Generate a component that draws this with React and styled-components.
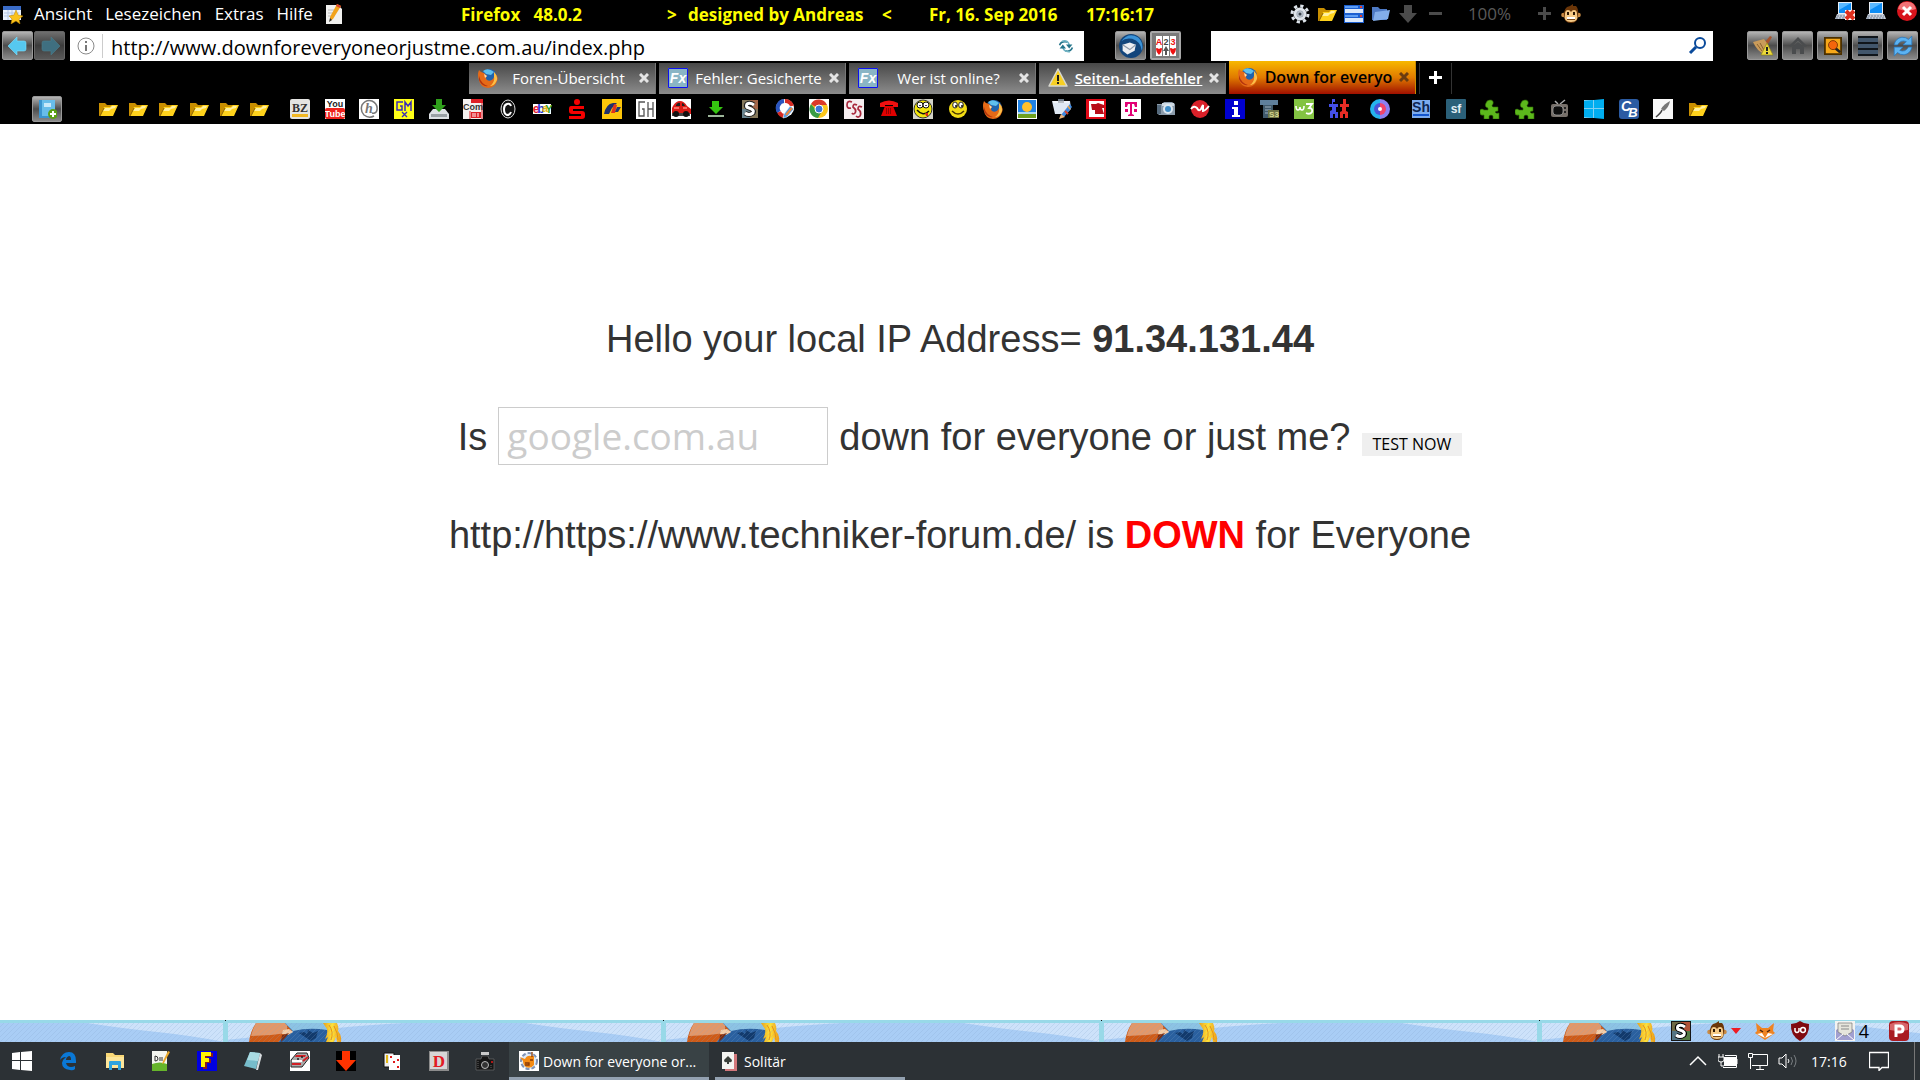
import React from 'react';
import styled, { createGlobalStyle, css } from 'styled-components';

const uiFont = `'Open Sans', 'Noto Sans', sans-serif`;

/* ---------- icons ---------- */

const Glyph = ({ x = 10, y, size, fill, bold, serif, italic, children }) => (
  <text
    x={x}
    y={y}
    fontSize={size}
    fill={fill}
    textAnchor='middle'
    fontWeight={bold ? 700 : 400}
    fontStyle={italic ? 'italic' : 'normal'}
    fontFamily={serif ? 'Liberation Serif, serif' : 'Liberation Sans, sans-serif'}
  >
    {children}
  </text>
);

const Fox = () => (
  <>
    <circle cx='11' cy='9' r='8' fill='#1f63ad' />
    <path d='M5 3Q10 -1 16 4L13 7L8 6Z' fill='#5fc0ee' />
    <path
      d='M1 2Q3 5 6 5L9 8Q7 10 9 12Q12 14 15 11Q17 8 16 4Q21 9 19 13Q17 20 10 20Q2 19 1 12Q-1 7 1 2Z'
      fill='#e56a17'
    />
    <path d='M16 4Q21 9 18 14Q16 18 12 18Q17 14 16 9Z' fill='#fbc048' />
    <path d='M1 8Q3 16 10 18Q4 19 1 12Z' fill='#b3340e' />
    <path d='M6 6L9 8L7 10Z' fill='#fde0b0' />
  </>
);

const Folder = () => (
  <>
    <path d='M1 4H7L9 6H16V9H7L3 17H1Z' fill='#c98f00' />
    <path d='M6 8H12L14 6H20L15 17H2Z' fill='#ffd21c' />
    <path d='M7 9H12L14 7H18L17 9L13 10L11 12H5Z' fill='#fff0a0' />
    <path d='M2 17L6 9' stroke='#8a6100' fill='none' />
  </>
);

const Monkey = () => (
  <>
    <circle cx='2.500' cy='11' r='2.300' fill='#c98b45' />
    <circle cx='17.500' cy='11' r='2.300' fill='#c98b45' />
    <path d='M3 13Q2 3 9 2L12 0L12 2L15 2Q18 5 17 13Q16 19 10 19Q4 19 3 13Z' fill='#6b3608' />
    <path d='M4 10Q4 6 7 6Q9 6 10 8Q11 6 13 6Q16 6 16 10Q18 18 10 18Q2 18 4 10Z' fill='#f5c986' />
    <path d='M7 8V11M13 8V11' stroke='#2b1604' strokeWidth='2' />
    <path d='M6 14H14' stroke='#fff' strokeWidth='2' />
    <path d='M6 15.500H14' stroke='#7c4a1a' />
  </>
);

const Puzzle = () => (
  <path
    d='M0 11Q2 9 4 11H8V9Q4 8 6 4Q7 1 10 1Q14 1 13 5Q11 7 13 8H18V12Q16 12 15 13Q16 15 19 14V20H13V17Q11 15 9 17V20H4V16Q0 17 0 14Z'
    fill='#5cb81c'
    stroke='#2f6d05'
    strokeWidth='.6'
  />
);

const StylishS = () => (
  <>
    <path d='M0 0H20V20H0Z' fill='#161616' />
    <path d='M1 1H10V10H1Z' fill='#6f6a45' />
    <path d='M10 1H19V10H10Z' fill='#b05338' />
    <path d='M1 10H10V19H1Z' fill='#547483' />
    <path d='M10 10H19V19H10Z' fill='#547a43' />
    <path d='M14 6Q10 3 7 5Q5 8 9 9Q15 11 13 14Q9 17 5 14' fill='none' stroke='#000' strokeWidth='5' />
    <path d='M14 6Q10 3 7 5Q5 8 9 9Q15 11 13 14Q9 17 5 14' fill='none' stroke='#fff' strokeWidth='3' />
  </>
);

const Laptop = () => (
  <>
    <path d='M3 1H17V13H3Z' fill='#e8eef5' />
    <path d='M4 2H16V12H4Z' fill='#0d8cf4' />
    <path d='M4 2H16L4 9Z' fill='#5ab8ff' />
    <path d='M2 13H18L20 18H0Z' fill='#c5cdd8' />
    <path d='M2 15H18M1 17H19' stroke='#74839a' strokeDasharray='2 1' />
  </>
);

const icons = {
  fox: <Fox />,
  folder: <Folder />,
  monkey: <Monkey />,
  puzzle: <Puzzle />,
  stylish: <StylishS />,
  laptop: <Laptop />,
  starPage: (
    <>
      <path d='M0 2H18V16H0Z' fill='#e9f0fb' />
      <path d='M0 2H18V6H0Z' fill='#3a6cc8' />
      <path d='M1 9H16M1 12H16M5 6V16M9 6V16' stroke='#b3c6e4' />
      <path
        d='M13 6L15 11L20 12L16 15L17 20L13 17L8 20L9 15L6 12L11 11Z'
        fill='#fbc21b'
        stroke='#bb8200'
        strokeWidth='.5'
      />
    </>
  ),
  note: (
    <>
      <path d='M2 1H14L18 5V20H2Z' fill='#f1f1ef' />
      <path d='M4 6H10M4 9H9M4 12H8' stroke='#bbb' />
      <path d='M13 0L17 2L9 15L6 17L6 13Z' fill='#f2a31b' />
      <path d='M13 0L17 2L16 4L12 2Z' fill='#d6412d' />
      <path d='M6 14L8 16L5 18Z' fill='#333' />
    </>
  ),
  gear: (
    <>
      <circle cx='10' cy='10' r='8' fill='none' stroke='#dde3ea' strokeWidth='3' strokeDasharray='3.200 3.080' />
      <circle cx='10' cy='10' r='5' fill='#8d98a5' stroke='#dfe4ea' strokeWidth='3' />
      <circle cx='10' cy='10' r='3' fill='#b5bec8' />
      <circle cx='10' cy='10' r='1.500' fill='#39424c' />
    </>
  ),
  panes: (
    <>
      <path d='M0 1H20V19H0Z' fill='#1c5fd0' />
      <path d='M1 5H19V9H1ZM1 14H19V18H1Z' fill='#dce9fa' />
      <path d='M1 2H14V4H1ZM1 11H14V13H1Z' fill='#5c9df4' />
      <path d='M16 3H18M16 12H18' stroke='#e6402c' strokeWidth='2' />
    </>
  ),
  blueFolder: (
    <>
      <path d='M1 3H7L9 5H16V16H1Z' fill='#4d79c4' />
      <path d='M4 8L19 6L17 15L2 17Z' fill='#83aeea' />
    </>
  ),
  downArrow: <path d='M6 1H14V9H19L10 19L1 9H6Z' fill='#4b4b4b' />,
  minus: <path d='M4 8H17V11H4Z' fill='#4b4b4b' />,
  plus: <path d='M9 3H12V8H17V11H12V16H9V11H4V8H9Z' fill='#4b4b4b' />,
  laptopOff: (
    <>
      <Laptop />
      <path d='M10 9H20V19H10Z' fill='#fff' />
      <path d='M11 10L19 18M19 10L11 18' stroke='#e0301e' strokeWidth='4' />
    </>
  ),
  close: (
    <>
      <circle cx='10' cy='10' r='10' fill='#d8141c' />
      <path d='M1 8Q3 0 10 1Q17 0 19 8Q10 11 1 8Z' fill='#f17276' />
      <path d='M6 6L14 14M14 6L6 14' stroke='#fff' strokeWidth='3' />
    </>
  ),
  back: <path d='M0 10L9 1V5H16Q18 5 18 7V13Q18 15 16 15H9V19Z' fill='#56c8f0' stroke='#7de0ff' strokeWidth='.6' />,
  forward: <path d='M20 10L11 1V5H4Q2 5 2 7V13Q2 15 4 15H11V19Z' fill='#3f6f80' stroke='#4c7d8c' strokeWidth='.6' />,
  info: (
    <>
      <circle cx='10' cy='10' r='8' fill='none' stroke='#8a8a8a' />
      <path d='M9 9H11V15H9ZM9 5H11V7H9Z' fill='#777' />
    </>
  ),
  reload: (
    <>
      <path d='M2 9Q4 3 12 5' stroke='#23748a' strokeWidth='2' fill='none' />
      <path d='M5 4Q13 2 14 9' stroke='#6fb3c4' strokeWidth='2' fill='none' />
      <path d='M10 8H18L14 13Z' fill='#23748a' />
      <path d='M18 12Q16 18 9 16' stroke='#23748a' strokeWidth='2' fill='none' />
      <path d='M15 17Q8 18 6 12' stroke='#6fb3c4' strokeWidth='2' fill='none' />
      <path d='M2 13H10L6 8Z' fill='#23748a' />
    </>
  ),
  thunderbird: (
    <>
      <circle cx='10' cy='10' r='10' fill='#12457c' />
      <path d='M2 6Q8 -2 16 3Q21 8 19 14Q18 6 11 4Q5 3 2 6Z' fill='#3b93d8' />
      <path d='M3 9L9 7L14 9L13 14L7 17L3 14Z' fill='#eceef2' />
      <path d='M3 9L9 13L14 9' stroke='#8d98a8' fill='none' />
    </>
  ),
  cards: (
    <>
      <path d='M0 0H6V20H0ZM7 0H13V20H7ZM14 0H20V20H14Z' fill='#fff' />
      <Glyph x='3' y='9' size='9' bold fill='#e11'>A</Glyph>
      <Glyph x='10' y='9' size='9' bold fill='#444'>2</Glyph>
      <Glyph x='17' y='9' size='9' bold fill='#e11'>3</Glyph>
      <path d='M0 13Q0 11 3 13Q6 11 6 13Q6 16 3 19Q0 16 0 13ZM14 13Q14 11 17 13Q20 11 20 13Q20 16 17 19Q14 16 14 13Z' fill='#e11' />
      <path d='M10 10L13 15H11V19H9V15H7Z' fill='#555' />
    </>
  ),
  search: (
    <>
      <circle cx='13' cy='7' r='5' fill='none' stroke='#0a4a9b' strokeWidth='2' />
      <path d='M9 11L3 17' stroke='#0a4a9b' strokeWidth='3' />
    </>
  ),
  broom: (
    <>
      <path d='M12 6L17 0L19 1L15 8Z' fill='#a8542c' />
      <path d='M0 6L11 3L16 10L11 18Q4 15 0 6Z' fill='#c99b5a' />
      <path d='M4 8L9 15M7 7L11 14' stroke='#8a6230' />
      <path d='M14 7L20 19H8Z' fill='#ecd93a' stroke='#8c7f10' strokeWidth='.6' />
      <path d='M14 11V15M14 16V18' stroke='#222' strokeWidth='2' />
    </>
  ),
  home: (
    <>
      <path d='M10 1L19 10L17 11L10 5L3 11L1 10Z' fill='#4a4c4e' />
      <path d='M10 6L16 11V18H12V13H8V18H4V11Z' fill='#4a4c4e' />
    </>
  ),
  find: (
    <>
      <path d='M1 1H19V19H1Z' fill='#f7a81a' stroke='#4a2f00' strokeWidth='2' />
      <path d='M12 12L18 17' stroke='#222' strokeWidth='3' />
      <circle cx='10' cy='9' r='5' fill='#f4650c' stroke='#7b3603' />
    </>
  ),
  list: (
    <>
      <path d='M0 0H20V20H0Z' fill='#42566b' />
      <path d='M0 1H20M0 7H20M0 13H20M0 19H20' stroke='#10151a' strokeWidth='2' />
    </>
  ),
  sync: (
    <>
      <path d='M2 9Q3 3 9 2Q13 2 15 4L18 1V9H10L13 6Q8 4 5 9Z' fill='#5cb3f2' stroke='#2a78bd' strokeWidth='.7' />
      <path d='M18 11Q17 17 11 18Q7 18 5 16L2 19V11H10L7 14Q12 16 15 11Z' fill='#5cb3f2' stroke='#2a78bd' strokeWidth='.7' />
    </>
  ),
  fx: (
    <>
      <path d='M0 0H20V20H0Z' fill='#8ab5c5' />
      <path d='M.5 .5H19.500V19.500H.5Z' fill='none' stroke='#0d10f2' />
      <Glyph y='15' size='14' bold italic fill='#fff'>Fx</Glyph>
    </>
  ),
  warning: (
    <>
      <path d='M10 1L19 18H1Z' fill='#f7cf23' stroke='#d8d8d0' strokeWidth='1.500' strokeLinejoin='round' />
      <path d='M10 7V13M10 14V16' stroke='#1c1c1c' strokeWidth='2' />
    </>
  ),
  addBook: (
    <>
      <path d='M2 1H18V19H2Z' fill='#3a94cf' />
      <path d='M5 1H18V17H5Z' fill='#68bdea' />
      <path d='M7 4H14V8H7Z' fill='#c9e9fa' />
      <circle cx='16' cy='15' r='5' fill='#5aa013' />
      <path d='M13 15H19M16 12V18' stroke='#fff' strokeWidth='2' />
    </>
  ),
  bz: (
    <>
      <rect width='20' height='20' rx='2' fill='#e4e4e2' />
      <Glyph y='13' size='12' bold serif fill='#333'>BZ</Glyph>
      <path d='M2 15H18V18H2Z' fill='#f2b824' />
    </>
  ),
  youtube: (
    <>
      <path d='M0 0H20V20H0Z' fill='#fff' />
      <rect y='9' width='20' height='11' rx='2' fill='#f0221c' />
      <Glyph y='8' size='9' bold fill='#222'>You</Glyph>
      <Glyph y='18' size='9' bold fill='#fff'>Tube</Glyph>
    </>
  ),
  at: (
    <>
      <path d='M0 0H20V20H0Z' fill='#fff' />
      <path d='M15 17Q10 20 5 16Q1 12 3 6Q7 0 13 2Q19 5 18 11Q17 15 13 14' fill='none' stroke='#777' strokeWidth='1.500' />
      <Glyph y='14' size='14' serif italic bold fill='#777'>h</Glyph>
    </>
  ),
  gmx: (
    <>
      <path d='M0 0H20V20H0Z' fill='#ffff18' />
      <path d='M9 3H3V11H8V7H6M11 12V3L14 7L17 3V12' stroke='#3a2bb8' strokeWidth='1.500' fill='none' />
      <path d='M8 13L13 18M13 13L8 18' stroke='#3a2bb8' strokeWidth='1.300' />
    </>
  ),
  install: (
    <>
      <path d='M4 10H16L20 15V20H0V15Z' fill='#dde1e4' />
      <path d='M2 15H18V18H2Z' fill='#9aa1a5' />
      <path d='M7 0H13V6H17L10 13L3 6H7Z' fill='#30a01c' />
    </>
  ),
  com: (
    <>
      <path d='M0 0H20V20H0Z' fill='#f4f1ef' />
      <path d='M8 0H20V4H8ZM8 13H18V19H8Z' fill='#df1f26' />
      <path d='M19 4V20M7 12V20' stroke='#df1f26' />
      <Glyph y='11' size='9' bold fill='#333'>Com</Glyph>
      <path d='M10 14V18M12 14V18M15 14V18' stroke='#fff' />
    </>
  ),
  chip: (
    <>
      <ellipse cx='10' cy='10' rx='7' ry='9' fill='#111' stroke='#ddd' />
      <path d='M13 7Q12 4 9 5Q6 6 6 10Q6 15 9 16Q12 16 13 13' stroke='#fff' strokeWidth='2' fill='none' />
    </>
  ),
  ebay: (
    <>
      <path d='M1 5H19V15H1Z' fill='#fff' />
      <Glyph x='4' y='14' size='12' bold fill='#e3202c'>e</Glyph>
      <Glyph x='9' y='14' size='12' bold fill='#2a37d8'>b</Glyph>
      <Glyph x='13' y='13' size='11' bold fill='#e8b80e'>a</Glyph>
      <Glyph x='17' y='14' size='11' bold fill='#3aa324'>Y</Glyph>
    </>
  ),
  sparkasse: (
    <>
      <circle cx='10' cy='3' r='3' fill='#f60000' />
      <path d='M4 7H17V10H6V12H15Q18 12 18 15V17Q18 20 15 20H2V17H14V15H5Q2 15 2 12V10Q2 7 4 7Z' fill='#f60000' />
    </>
  ),
  flag: (
    <>
      <path d='M0 0H20V20H0Z' fill='#fdc60a' />
      <path d='M2 15Q4 5 11 4H15L10 9L7 15Z' fill='#20306b' />
      <path d='M9 14L12 5L15 6L13 14Z' fill='#e3321c' />
      <path d='M15 8H19L16 13L13 13Z' fill='#27356d' />
    </>
  ),
  gh: (
    <>
      <path d='M0 0H20V20H0Z' fill='#fff' />
      <path d='M9 3H3V17H8V10H6M12 3V18M17 3V18M12 10H17' stroke='#555' strokeWidth='1.300' fill='none' />
    </>
  ),
  car: (
    <>
      <path d='M0 0H20V20H0Z' fill='#fff' />
      <path d='M2 7Q5 2 9 2Q13 2 16 7L20 10V15H1V9Z' fill='#dc1c17' />
      <path d='M5 6Q7 3 9 4V7H5ZM11 4Q13 4 14 7H11Z' fill='#222' />
      <path d='M1 14H19V17H1Z' fill='#444' />
      <circle cx='5' cy='15' r='3' fill='#111' />
      <circle cx='15' cy='15' r='3' fill='#111' />
      <path d='M3 9H8M12 9H16' stroke='#ff8b7e' strokeWidth='1.500' />
    </>
  ),
  getArrow: (
    <>
      <path d='M6 2H13V8H17L10 15L3 8H6Z' fill='#35c510' />
      <path d='M2 16H18V18H2Z' fill='#9db69a' />
    </>
  ),
  stylishSmall: (
    <>
      <path d='M2 1H18V19H2Z' fill='#86795c' />
      <path d='M10 1H18V10H10Z' fill='#a4674a' />
      <path d='M2 10H10V19H2Z' fill='#6a8590' />
      <path d='M14 6Q10 3 7 5Q5 8 9 9Q15 11 13 14Q9 17 5 14' fill='none' stroke='#222' strokeWidth='5' />
      <path d='M14 6Q10 3 7 5Q5 8 9 9Q15 11 13 14Q9 17 5 14' fill='none' stroke='#fff' strokeWidth='3' />
    </>
  ),
  swirl: (
    <>
      <circle cx='10' cy='9' r='9' fill='#fff' />
      <path d='M9 2A7 7 0 0 0 4 13' stroke='#2a55bf' strokeWidth='4' fill='none' />
      <path d='M10 2A7 7 0 0 1 17 7' stroke='#d62b23' strokeWidth='4' fill='none' />
      <path d='M4 13A7 7 0 0 0 9 17' stroke='#d62b23' strokeWidth='4' fill='none' />
      <path d='M15 7L19 10L12 18L8 19L9 15Z' fill='#4c9be6' stroke='#fff' strokeWidth='.6' />
      <path d='M11 16L17 9' stroke='#f0883a' strokeWidth='2' />
    </>
  ),
  chrome: (
    <>
      <path d='M0 0H20V20H0Z' fill='#fff' />
      <circle cx='10' cy='10' r='9' fill='#fbc61c' />
      <path d='M10 10L2 5A9 9 0 0 1 18 6H10Z' fill='#dc3a2a' />
      <path d='M2 5A9 9 0 0 0 9 19L13 12L8 12Z' fill='#3a9d45' />
      <circle cx='10' cy='10' r='4' fill='#3d78d8' stroke='#fff' />
    </>
  ),
  css: (
    <>
      <path d='M0 0H20V20H0Z' fill='#f5edef' />
      <path
        d='M8 3Q3 1 3 6Q3 10 7 9M13 6Q9 4 9 8Q13 11 11 14Q9 16 8 14M18 8Q14 6 14 10Q18 13 16 17Q14 19 12 17'
        stroke='#a8283c'
        strokeWidth='1.700'
        fill='none'
      />
    </>
  ),
  phone: (
    <>
      <path d='M1 4Q10 -1 19 4V8H14V6H6V8H1Z' fill='#ee1010' />
      <path d='M6 7H14L18 17H2Z' fill='#e00000' />
      <path d='M7 10H13M7 12H13M7 14H13' stroke='#400' strokeDasharray='1 1' />
    </>
  ),
  crazySmiley: (
    <>
      <path d='M0 0H20V20H0Z' fill='#d3d3c8' />
      <circle cx='10' cy='10' r='9' fill='#f2e60c' stroke='#333' />
      <circle cx='7' cy='6' r='3' fill='#fff' stroke='#111' />
      <circle cx='13' cy='6' r='3' fill='#fff' stroke='#111' />
      <path d='M7 6V7M13 6V7M4 11Q10 18 16 12' stroke='#111' strokeWidth='1.500' fill='none' />
      <path d='M12 14H15V17H13Z' fill='#dc2b16' />
    </>
  ),
  smiley: (
    <>
      <circle cx='10' cy='10' r='9' fill='#f2dc14' />
      <ellipse cx='7' cy='6' rx='2.300' ry='3' fill='#fff' stroke='#222' />
      <ellipse cx='13' cy='6' rx='2.300' ry='3' fill='#fff' stroke='#222' />
      <path d='M8 6V8M14 6V8' stroke='#111' strokeWidth='1.500' />
      <path d='M4 12Q10 18 16 12' stroke='#4a3800' fill='none' strokeWidth='1.500' />
    </>
  ),
  sunset: (
    <>
      <path d='M0 0H20V20H0Z' fill='#fff' />
      <path d='M1 1H19V14H1Z' fill='#1f82e6' />
      <path d='M1 13H19V15H1Z' fill='#a8d7f4' />
      <path d='M1 15H19V19H1Z' fill='#6fa01f' />
      <circle cx='10' cy='8' r='5' fill='#ffc02c' />
    </>
  ),
  clipboard: (
    <>
      <path d='M0 2H18L19 10L14 15L3 15Z' fill='#dfe8f3' />
      <path d='M6 0H12V4H6Z' fill='#6f7b88' />
      <path d='M1 3H17' stroke='#fff' />
      <path d='M18 5L20 8L12 18L9 16Z' fill='#3f8ae2' />
      <path d='M16 7L18 10' stroke='#e8a34a' strokeWidth='1.500' />
      <path d='M9 15L13 18L7 20Z' fill='#e9b37d' />
      <path d='M13 12L16 15' stroke='#d9452b' strokeWidth='2' />
    </>
  ),
  redBadge: (
    <>
      <path d='M0 0H20V20H0Z' fill='#e00a18' />
      <path d='M3 2H18V18H3Z' fill='#fff' />
      <path d='M5 5H10L12 4L18 6V9H16L18 15H9V11H6Z' fill='#b80d19' />
    </>
  ),
  telekom: (
    <>
      <path d='M0 0H20V20H0Z' fill='#fff' />
      <path d='M4 3H16V8H14L13 5H11V15L13 16V17H7V16L9 15V5H7L6 8H4Z' fill='#e20074' />
      <path d='M4 10H7V13H4ZM13 10H16V13H13Z' fill='#e20074' />
    </>
  ),
  camera: (
    <>
      <path d='M1 5H6L8 3H16L19 5V16H3L1 14Z' fill='#8b9bab' />
      <path d='M1 6H5V15H1Z' fill='#55697c' />
      <path d='M6 4H18V7H6Z' fill='#ccd7e1' />
      <circle cx='12' cy='10' r='5' fill='#dce7f0' />
      <circle cx='12' cy='10' r='3' fill='#3d8bc6' />
    </>
  ),
  pulse: (
    <>
      <circle cx='10' cy='10' r='9' fill='#d9212a' />
      <path d='M1 10Q4 6 7 9Q9 13 11 10L13 6V12Q15 12 19 7' stroke='#fff' strokeWidth='2' fill='none' />
    </>
  ),
  infoBlue: (
    <>
      <path d='M0 0H20V20H0Z' fill='#0000cf' />
      <path d='M9 2H13V6H9ZM7 8H13V16H15V18H7V16H9V10H7Z' fill='#fff' />
    </>
  ),
  tableTool: (
    <>
      <path d='M0 1H18V6H0Z' fill='#5f7f9b' />
      <path d='M3 6H13V19H3Z' fill='#40596b' />
      <path d='M5 8H11M5 11H11M5 14H11' stroke='#a0b2c0' />
      <path d='M8 11H19V19H8Z' fill='#6f7445' />
      <Glyph x='14' y='18' size='8' bold fill='#d5d68f'>S3</Glyph>
    </>
  ),
  w3: (
    <>
      <path d='M0 0H20V20H0Z' fill='#83c342' />
      <path d='M2 7Q2 11 4 11Q6 11 6 8Q6 11 8 11Q10 11 10 7' stroke='#fff' strokeWidth='1.600' fill='none' />
      <path d='M12 5H18L15 9Q19 9 18 13Q16 16 12 14' stroke='#fff' strokeWidth='1.800' fill='none' />
    </>
  ),
  people: (
    <>
      <path d='M3 0H6V3H4V5H9V8H7V13H9V19H6V15L4 15V19H1V12L3 11V8H0V5H3Z' fill='#4450e8' />
      <path d='M14 0H17V5H20V8H17V12L19 13V19H16V15H14V19H11V13L13 12V8H11V5H14Z' fill='#e82c25' />
    </>
  ),
  target: (
    <>
      <path d='M10 0A10 10 0 0 0 10 20Z' fill='#25b4ee' />
      <path d='M10 0A10 10 0 0 1 10 20Z' fill='#8c7ff2' />
      <path d='M10 4A6 6 0 0 0 10 16Z' fill='#4b55d8' />
      <path d='M10 4A6 6 0 0 1 10 16Z' fill='#f2456b' />
      <circle cx='10' cy='10' r='2' fill='#fff' />
    </>
  ),
  sh: (
    <>
      <path d='M1 1H19V19H1Z' fill='#7cabee' />
      <Glyph y='13' size='14' bold fill='#0d2450'>Sh</Glyph>
      <path d='M2 16H18' stroke='#1355ce' strokeWidth='2' />
    </>
  ),
  sf: (
    <>
      <rect width='20' height='20' rx='1' fill='#2b6079' />
      <Glyph y='14' size='12' bold fill='#e3eef3'>sf</Glyph>
    </>
  ),
  tv: (
    <>
      <path d='M8 5L5 2M10 5L15 1' stroke='#aaa' strokeWidth='1.500' />
      <rect x='1' y='5' width='17' height='13' rx='2' fill='#77706a' />
      <rect x='3' y='7' width='10' height='9' rx='3' fill='#0d0d0d' stroke='#aaa' strokeWidth='.7' />
      <path d='M15 8V10M15 12V14' stroke='#222' strokeWidth='2' />
    </>
  ),
  windows: (
    <>
      <path d='M0 1H20V19H0Z' fill='#7fd0f2' />
      <path d='M0 2L9 1V9H0ZM10 1L20 0V9H10ZM0 10H9V19L0 18ZM10 10H20V20L10 19Z' fill='#00aef0' />
    </>
  ),
  cb: (
    <>
      <rect width='20' height='20' rx='3' fill='#2b5ba2' />
      <Glyph x='7' y='12' size='14' bold italic fill='#fff'>C</Glyph>
      <Glyph x='14' y='18' size='13' bold italic fill='#fff'>B</Glyph>
    </>
  ),
  pen: (
    <>
      <path d='M0 0H20V20H0Z' fill='#f8f8f8' />
      <path d='M17 2Q16 8 11 12L8 10Q11 5 17 2Z' fill='#777' />
      <path d='M9 11Q8 14 3 18' stroke='#444' strokeWidth='1.500' fill='none' />
    </>
  ),
  miniFox: (
    <>
      <path d='M1 2L7 7H13L19 2L18 10L20 12L10 19L0 12L2 10Z' fill='#ef8422' />
      <path d='M2 13L7 12L10 17ZM18 13L13 12L10 17Z' fill='#fff' />
      <path d='M5 9L8 11M15 9L12 11' stroke='#4b2208' strokeWidth='1.500' />
    </>
  ),
  shield: (
    <>
      <path d='M10 0Q14 3 19 3Q20 14 10 20Q0 14 1 3Q6 3 10 0Z' fill='#800a10' />
      <path d='M5 7V10Q7 13 9 10V7' stroke='#fff' strokeWidth='1.500' fill='none' />
      <circle cx='13' cy='9' r='2.400' fill='none' stroke='#fff' strokeWidth='1.500' />
    </>
  ),
  mail: (
    <>
      <path d='M0 0H20V20H0Z' fill='#f3f3f1' />
      <path d='M1 9L10 4L19 9V19H1Z' fill='#a19fd0' />
      <path d='M3 2H17V11L10 15L3 11Z' fill='#e6e5dc' stroke='#777' strokeWidth='.7' />
      <path d='M6 5H14M6 8H14' stroke='#888' />
      <path d='M1 19L8 13M19 19L12 13' stroke='#fff' />
    </>
  ),
  pBadge: (
    <>
      <rect width='20' height='20' rx='4' fill='#a91a20' />
      <path d='M1 3Q10 -1 19 3V9Q10 11 1 9Z' fill='#d7656a' />
      <path d='M7 16V5H11Q14 5 14 8Q14 11 11 11H8' stroke='#fff' strokeWidth='3' fill='none' />
    </>
  ),
  winLogo: <path d='M0 2L8 1V9H0ZM9 1L20 0V9H9ZM0 10H8V19L0 18ZM9 10H20V20L9 19Z' fill='#fff' />,
  edge: (
    <path
      d='M2 9Q4 1 11 1Q18 1 18 10V12H8Q9 16 13 16Q15 16 17 15V18Q15 20 12 19Q4 18 4 12Q5 8 8 6Q4 6 2 9ZM8 9H13Q13 5 11 5Q8 6 8 9Z'
      fill='#0a78d6'
      fillRule='evenodd'
    />
  ),
  explorer: (
    <>
      <path d='M1 2H8L10 4H19V17H1Z' fill='#f9d877' />
      <path d='M1 6H19V17H1Z' fill='#fde69a' />
      <path d='M4 19V11Q4 10 5 10H15Q16 10 16 11V19H13V14H7V19Z' fill='#2da3de' />
    </>
  ),
  notepad: (
    <>
      <path d='M1 0H16V20H1Z' fill='#f4f6f0' />
      <path d='M1 13Q9 10 16 13V20H1Z' fill='#66b52b' />
      <path d='M4 5V10Q7 10 7 8Q7 5 4 5M9 6V10M11 6V10' stroke='#333' fill='none' />
      <path d='M17 0L19 1L13 12L11 13L12 10Z' fill='#eba92b' />
    </>
  ),
  fBlue: (
    <>
      <path d='M0 0H20V20H0Z' fill='#0000e0' />
      <path d='M6 2H16V6H10V8H14V12H10V18H6Z' fill='#8a1c1c' />
      <path d='M4 1H14V5H8V7H12V11H8V16H4Z' fill='#fff200' />
    </>
  ),
  pad: (
    <>
      <path d='M7 1L17 2L13 18L1 15Z' fill='#77bccb' />
      <path d='M7 1L17 2L15 10L4 9Z' fill='#a9dbe3' />
      <path d='M17 2L19 4L15 19H13Z' fill='#d8dde0' />
    </>
  ),
  cartridge: (
    <>
      <path d='M0 0H20V20H0Z' fill='#fff' />
      <path d='M1 9L7 2H17L19 7L12 16H1Z' fill='#aaa' stroke='#222' />
      <path d='M6 4H16L15 6H5Z' fill='#d12025' />
      <path d='M2 9H12V11H2Z' fill='#fff' />
      <path d='M2 13H11M13 10L18 6' stroke='#d12025' strokeWidth='2' />
      <path d='M8 7V9M12 5V7' stroke='#222' strokeWidth='1.500' />
    </>
  ),
  redArrow: (
    <>
      <path d='M0 0H20V20H0Z' fill='#000' />
      <path d='M6 0H14V9H20L10 20L0 9H6Z' fill='#ff3300' />
    </>
  ),
  playingCards: (
    <>
      <path d='M2 2H12V16H2Z' fill='#eee' stroke='#111' />
      <path d='M4 4H6V12H4Z' fill='#e3b816' />
      <path d='M7 4H18V19H7Z' fill='#fff' />
      <path d='M8 5H10V7H8ZM15 8H17V10H15ZM11 10H13V12H11ZM15 15H17V17H15Z' fill='#e01818' />
    </>
  ),
  dBadge: (
    <>
      <path d='M0 0H20V20H0Z' fill='#8c8c8c' />
      <path d='M1 1H18V18H1Z' fill='#d6d6d6' />
      <Glyph y='16' size='17' bold serif fill='#e11b22'>D</Glyph>
    </>
  ),
  slr: (
    <>
      <path d='M6 1H14V4H6Z' fill='#c9c9c9' />
      <path d='M7 5H13L14 8H19V19H1V8H6Z' fill='#151515' stroke='#777' strokeWidth='.6' />
      <circle cx='10' cy='14' r='3.500' fill='#333' stroke='#bbb' />
      <path d='M3 10V17M16 14V18' stroke='#666' strokeDasharray='1 1' />
      <path d='M17 10V12' stroke='#e01818' strokeWidth='1.500' />
    </>
  ),
  foxTask: (
    <>
      <path d='M0 0H20V20H0Z' fill='#fff' />
      <circle cx='10' cy='10' r='8' fill='#dfeaf5' stroke='#7f93b5' strokeWidth='2' strokeDasharray='4 2' />
      <path d='M1 6L6 8Q8 4 12 5L15 5V14Q12 18 7 16Q4 14 4 10Z' fill='#f38b14' />
      <path d='M13 1V6M6 12H10V14H6M11 9H14' stroke='#8a3a05' strokeWidth='1.300' fill='none' />
    </>
  ),
  solitaire: (
    <>
      <path d='M5 3H17V20H5Z' fill='#d2777b' />
      <path d='M2 1H14V18H2Z' fill='#f4f4f2' />
      <path d='M8 5L12 9Q12 12 9 11V13H7V11Q4 12 4 9Z' fill='#3a3f3a' />
    </>
  ),
  chevronUp: <path d='M2 14L10 6L18 14' stroke='#fff' strokeWidth='1.500' fill='none' />,
  battery: (
    <>
      <path d='M6 6H18V15H6Z' fill='#fff' />
      <path d='M5 16.500H18.500V4.500H7M19 8V13' stroke='#fff' fill='none' />
      <path d='M0 6H6V9Q6 11 3 11Q0 11 0 9ZM1 3V6M5 3V6M3 11V15H6' stroke='#fff' fill='none' />
    </>
  ),
  network: (
    <>
      <path d='M5 3.500H19.500V14.500H4M12 15V18M8 18.500H16' stroke='#fff' fill='none' />
      <path d='M.5 2.500H4.500V6.500H.5ZM2.500 7V18' stroke='#fff' fill='none' />
    </>
  ),
  volume: (
    <>
      <path d='M1 7H4L8 3V17L4 13H1Z' stroke='#fff' fill='none' />
      <path d='M10 8Q12 10 10 12' stroke='#fff' fill='none' />
      <path d='M13 6Q16 10 13 14M16 4Q20 10 16 16' stroke='#7a7f82' fill='none' />
    </>
  ),
  message: <path d='M.5 1.500H19.500V16.500H13L10 19.500V16.500H.5Z' stroke='#fff' fill='none' strokeWidth='1.300' />,
};

const Icon = ({ name, size = 20 }) => (
  <svg width={size} height={size} viewBox='0 0 20 20' aria-hidden='true'>
    {icons[name]}
  </svg>
);

/* ---------- data ---------- */

const menus = ['Ansicht', 'Lesezeichen', 'Extras', 'Hilfe'];

const tabs = [
  { icon: 'fox', title: 'Foren-Übersicht' },
  { icon: 'fx', title: 'Fehler: Gesicherte' },
  { icon: 'fx', title: 'Wer ist online?' },
  { icon: 'warning', title: 'Seiten-Ladefehler', unread: true },
  { icon: 'fox', title: 'Down for everyo', active: true },
];

const folders = [1, 2, 3, 4, 5, 6];

const bookmarks = [
  'bz', 'youtube', 'at', 'gmx', 'install', 'com', 'chip', 'ebay', 'sparkasse', 'flag',
  'gh', 'car', 'getArrow', 'stylishSmall', 'swirl', 'chrome', 'css', 'phone', 'crazySmiley', 'smiley',
  'fox', 'sunset', 'clipboard', 'redBadge', 'telekom', 'camera', 'pulse', 'infoBlue', 'tableTool', 'w3',
  'people',
];

const moreBookmarks = ['sh', 'sf', 'puzzle', 'puzzle', 'tv', 'windows', 'cb', 'pen', 'folder'];

const launchers = [
  'winLogo', 'edge', 'explorer', 'notepad', 'fBlue', 'pad', 'cartridge', 'redArrow', 'playingCards', 'dBadge', 'slr',
];

/* ---------- app ---------- */

const MenuBar = () => (
  <MenuRow>
    <MenuGroup>
      <Icon name='starPage' />
      {menus.map((menu) => (
        <MenuButton key={menu}>{menu}</MenuButton>
      ))}
      <IconButton aria-label='Notiz'>
        <Icon name='note' />
      </IconButton>
    </MenuGroup>
    <TitleGroup>
      <TitlePart $width={206}>Firefox &nbsp; 48.0.2</TitlePart>
      <TitlePart $width={21}>&gt;</TitlePart>
      <TitlePart $width={194}>designed by Andreas</TitlePart>
      <TitlePart $width={47}>&lt;</TitlePart>
      <TitlePart $width={157}>Fr, 16. Sep 2016</TitlePart>
      <TitlePart $width={70}>17:16:17</TitlePart>
    </TitleGroup>
    <ToolGroup>
      <IconButton aria-label='Einstellungen'><Icon name='gear' /></IconButton>
      <IconButton aria-label='Ordner'><Icon name='folder' /></IconButton>
      <IconButton aria-label='Fenster'><Icon name='panes' /></IconButton>
      <IconButton aria-label='Profil'><Icon name='blueFolder' /></IconButton>
      <IconButton aria-label='Downloads'><Icon name='downArrow' /></IconButton>
      <IconButton aria-label='Verkleinern'><Icon name='minus' /></IconButton>
      <ZoomLevel>100%</ZoomLevel>
      <IconButton aria-label='Vergrößern'><Icon name='plus' /></IconButton>
      <IconButton aria-label='Greasemonkey'><Icon name='monkey' /></IconButton>
    </ToolGroup>
    <WindowGroup>
      <IconButton aria-label='Minimieren'><Icon name='laptopOff' /></IconButton>
      <IconButton aria-label='Maximieren'><Icon name='laptop' /></IconButton>
      <IconButton aria-label='Schließen'><Icon name='close' /></IconButton>
    </WindowGroup>
  </MenuRow>
);

const NavBar = () => (
  <NavRow>
    <ButtonPair $gap={1}>
      <MetalButton aria-label='Zurück'><Icon name='back' /></MetalButton>
      <MetalButton $dim aria-label='Vor'><Icon name='forward' /></MetalButton>
    </ButtonPair>
    <UrlBox>
      <Icon name='info' />
      <Divider />
      <UrlInput aria-label='Adresse' defaultValue='http://www.downforeveryoneorjustme.com.au/index.php' />
      <IconButton aria-label='Neu laden'><Icon name='reload' size={16} /></IconButton>
    </UrlBox>
    <AppButtons>
      <MetalButton aria-label='Thunderbird'><Icon name='thunderbird' size={24} /></MetalButton>
      <MetalButton $flat aria-label='Solitär'><Icon name='cards' /></MetalButton>
    </AppButtons>
    <SearchBox>
      <SearchInput aria-label='Suchen' />
      <IconButton aria-label='Suche starten'><Icon name='search' /></IconButton>
    </SearchBox>
    <ButtonPair $gap={4}>
      <MetalButton aria-label='Aufräumen'><Icon name='broom' /></MetalButton>
      <MetalButton aria-label='Startseite'><Icon name='home' /></MetalButton>
      <MetalButton aria-label='Finden'><Icon name='find' size={18} /></MetalButton>
      <MetalButton aria-label='Liste'><Icon name='list' /></MetalButton>
      <MetalButton aria-label='Aktualisieren'><Icon name='sync' size={22} /></MetalButton>
    </ButtonPair>
  </NavRow>
);

const TabBar = () => (
  <TabRow>
    {tabs.map((tab) => (
      <Tab key={tab.title} $active={tab.active}>
        <Icon name={tab.icon} />
        <TabTitle $active={tab.active} $unread={tab.unread}>{tab.title}</TabTitle>
        <TabClose $active={tab.active} aria-label='Tab schließen'>
          <svg width='10' height='10' viewBox='0 0 10 10'>
            <path d='M1 1L9 9M9 1L1 9' stroke='currentColor' strokeWidth='3' />
          </svg>
        </TabClose>
      </Tab>
    ))}
    <NewTab aria-label='Neuer Tab'>
      <svg width='13' height='13' viewBox='0 0 13 13'>
        <path d='M5 0H8V5H13V8H8V13H5V8H0V5H5Z' fill='#fff' />
      </svg>
    </NewTab>
  </TabRow>
);

const BookmarkBar = () => (
  <BookmarkRow>
    <MetalButton $short aria-label='Lesezeichen hinzufügen'><Icon name='addBook' /></MetalButton>
    <FolderList>
      {folders.map((folder) => (
        <Bookmark key={folder} href='#' aria-label='Ordner'><Icon name='folder' /></Bookmark>
      ))}
    </FolderList>
    <BookmarkList $width={1059}>
      {bookmarks.map((name) => (
        <Bookmark key={name} href='#' aria-label={name}><Icon name={name} /></Bookmark>
      ))}
    </BookmarkList>
    <Bookmark href='#' aria-label='target'><Icon name='target' /></Bookmark>
    <BookmarkList $width={297}>
      {moreBookmarks.map((name, i) => (
        <Bookmark key={i} href='#' aria-label={name}><Icon name={name} /></Bookmark>
      ))}
    </BookmarkList>
  </BookmarkRow>
);

const Persona = () => (
  <PersonaArt aria-hidden='true'>
    <defs>
      <pattern id='hatch' width='5' height='5' patternUnits='userSpaceOnUse'>
        <path d='M0 5L5 0' stroke='#7f9fc8' strokeWidth='.6' opacity='.35' />
      </pattern>
      <linearGradient id='flame' x1='0' x2='1'>
        <stop offset='0' stopColor='#f0a313' />
        <stop offset='.5' stopColor='#ffe23a' />
        <stop offset='1' stopColor='#f19a10' />
      </linearGradient>
      <pattern id='tile' x='225' width='438' height='22' patternUnits='userSpaceOnUse'>
        <path d='M0 0H438V22H0Z' fill='#a9cdf5' />
        <path d='M300 3Q340 9 370 12T438 22V3Z' fill='#cde2fa' />
        <path d='M0 3H180Q120 6 80 12Q40 16 0 20Z' fill='#cde2fa' />
        <path d='M24 22Q25 12 31 3H59L68 10L60 15L54 22Z' fill='#cf5b17' />
        <path d='M31 3H62V13L46 15L26 16Q28 8 31 3Z' fill='#e2986a' />
        <path d='M54 22Q58 14 68 12L60 3H102Q107 12 104 22Z' fill='#2a609f' />
        <path d='M60 3H100Q103 7 102 10Q84 7 68 11Z' fill='#8cc3e4' />
        <path d='M74 13L79 12L82 14L83 10L88 13L93 11L91 18L86 21L80 17Z' fill='#123a6c' />
        <path d='M58 10L64 9L68 12L63 15L57 14Z' fill='#f6cda6' />
        <path d='M57 15L64 13L60 18L56 22Z' fill='#7c2e12' />
        <path
          d='M98 3H112Q114 8 113 11Q117 16 116 22H112L111 17L109 22H101L103 17L100 19Q103 13 102 9Z'
          fill='url(#flame)'
        />
        <path d='M104 5Q109 12 106 20M109 6Q113 13 113 20' stroke='#e8930f' fill='none' />
        <path d='M0 0H438V22H0Z' fill='url(#hatch)' />
        <path d='M0 0H438V3H0Z' fill='#98d9e8' />
        <path d='M0 3H3V22H0ZM436 3H438V22H436Z' fill='#98d9e8' />
        <path d='M0 0H1V1H0Z' fill='#111' />
      </pattern>
    </defs>
    <rect width='100%' height='22' fill='url(#tile)' />
  </PersonaArt>
);

const App = () => (
  <Screen>
    <GlobalStyle />
    <Header>
      <MenuBar />
      <NavBar />
      <TabBar />
      <BookmarkBar />
    </Header>
    <Page>
      <Line>
        Hello your local IP Address= <b>91.34.131.44</b>
      </Line>
      <CheckForm onSubmit={(e) => e.preventDefault()}>
        <label htmlFor='domain'>Is</label>
        <DomainInput id='domain' placeholder='google.com.au' />
        <span>down for everyone or just me?</span>
        <TestButton>TEST NOW</TestButton>
      </CheckForm>
      <Line>
        http://https://www.techniker-forum.de/ is <Down>DOWN</Down> for Everyone
      </Line>
    </Page>
    <StatusBar>
      <Persona />
      <StatusItem $space={16}><Icon name='stylish' /></StatusItem>
      <StatusItem $space={4}><Icon name='monkey' /></StatusItem>
      <StatusItem $space={14}>
        <svg width='10' height='6' viewBox='0 0 10 6'><path d='M0 0H10L5 6Z' fill='#ee1c24' /></svg>
      </StatusItem>
      <StatusItem $space={15}><Icon name='miniFox' /></StatusItem>
      <StatusItem $space={25}><Icon name='shield' /></StatusItem>
      <StatusItem $space={4}><Icon name='mail' /></StatusItem>
      <StatusItem $space={20}>4</StatusItem>
      <StatusItem $space={11}><Icon name='pBadge' /></StatusItem>
    </StatusBar>
    <Taskbar>
      <Launchers>
        {launchers.map((name) => (
          <IconButton key={name} aria-label={name}><Icon name={name} /></IconButton>
        ))}
      </Launchers>
      <Task $active $width={200}>
        <Icon name='foxTask' />
        Down for everyone or...
      </Task>
      <Task $width={190}>
        <Icon name='solitaire' />
        Solitär
      </Task>
      <Tray>
        <IconButton aria-label='Ausgeblendete Symbole'><Icon name='chevronUp' /></IconButton>
        <IconButton aria-label='Akku'><Icon name='battery' /></IconButton>
        <IconButton aria-label='Netzwerk'><Icon name='network' /></IconButton>
        <IconButton aria-label='Lautstärke'><Icon name='volume' /></IconButton>
        <Clock>17:16</Clock>
        <IconButton aria-label='Benachrichtigungen'><Icon name='message' /></IconButton>
      </Tray>
    </Taskbar>
  </Screen>
);

export default App;

const GlobalStyle = createGlobalStyle`
  * {
    box-sizing: border-box;
  }
  body {
    margin: 0;
    background: #fff;
    font-family: ${uiFont};
  }
  button, input {
    margin: 0;
    padding: 0;
    border: 0;
    font: inherit;
    color: inherit;
    background: none;
  }
  svg {
    display: block;
    flex: none;
  }
`;

const Screen = styled.div`
  display: flex;
  flex-direction: column;
  min-height: 100vh;
`;

const Header = styled.header`
  background: #000;
  color: #fff;
`;

const IconButton = styled.button`
  display: flex;
  align-items: center;
  justify-content: center;
  flex: none;
`;

const MenuRow = styled.div`
  display: flex;
  align-items: center;
  height: 31px;
  padding: 0 3px;
  font-size: 17px;
  line-height: 24px;
`;
const MenuGroup = styled.nav`
  display: flex;
  align-items: center;
  gap: 11px;
  width: 458px;
  padding-bottom: 4px;
`;
const MenuButton = styled.button`
  & + & {
    margin-left: 2px;
  }
`;
const TitleGroup = styled.div`
  display: flex;
  flex: 1;
  padding-bottom: 2px;
  color: #ff0;
  font-weight: 700;
`;
const TitlePart = styled.span`
  width: ${(props) => props.$width}px;
  white-space: nowrap;
`;
const ToolGroup = styled.div`
  display: flex;
  align-items: center;
  gap: 7px;
  width: 545px;
  padding-bottom: 4px;
`;
const ZoomLevel = styled.span`
  width: 75px;
  text-align: center;
  color: #5a5a5a;
`;
const WindowGroup = styled.div`
  display: flex;
  gap: 11px;
  padding-bottom: 10px;
`;

const NavRow = styled.div`
  display: flex;
  height: 30px;
  padding: 0 2px;
`;
const ButtonPair = styled.div`
  display: flex;
  gap: ${(props) => props.$gap}px;
`;
const MetalButton = styled(IconButton)`
  width: ${(props) => (props.$short ? 30 : 31)}px;
  height: ${(props) => (props.$short ? 26 : 29)}px;
  border: 1px solid #999;
  border-radius: 2px;
  background: linear-gradient(#b4b4b4, #4c4c4c 50%, #8a8a8a);
  ${(props) =>
    props.$dim &&
    css`
      border-color: #666;
      background: linear-gradient(#6f6f6f, #3c3c3c 50%, #595959);
    `}
  ${(props) =>
    props.$flat &&
    css`
      border: 2px solid #a8a8a8;
      background: #7a7a7a;
    `}
`;
const UrlBox = styled.div`
  display: flex;
  align-items: center;
  flex: 1;
  margin-left: 5px;
  padding: 0 10px 0 6px;
  background: #fff;
  color: #000;
`;
const Divider = styled.span`
  width: 1px;
  height: 24px;
  margin-left: 6px;
  background: #ccc;
`;
const UrlInput = styled.input`
  flex: 1;
  height: 30px;
  padding: 2px 0 0 8px;
  font-size: 20px;
`;
const AppButtons = styled.div`
  display: flex;
  gap: 4px;
  margin: 0 30px 0 31px;
`;
const SearchBox = styled.div`
  display: flex;
  width: 502px;
  margin-right: 34px;
  padding: 0 6px;
  background: #fff;
  color: #000;
`;
const SearchInput = styled.input`
  flex: 1;
`;

const TabRow = styled.div`
  display: flex;
  align-items: flex-end;
  gap: 3px;
  height: 33px;
  padding-left: 469px;
`;
const Tab = styled.div`
  display: flex;
  align-items: center;
  width: 187px;
  height: ${(props) => (props.$active ? 33 : 31)}px;
  padding: 0 6px 2px 9px;
  border-right: 1px solid #777;
  background: linear-gradient(#484848, #8c8c8c);
  ${(props) =>
    props.$active &&
    css`
      border-color: #c98a00;
      background: linear-gradient(#f8b800, #e07a00 50%, #a01000);
    `}
`;
const TabTitle = styled.span`
  flex: 1;
  font-size: ${(props) => (props.$active ? 16 : 15)}px;
  line-height: 20px;
  text-align: center;
  white-space: nowrap;
  color: ${(props) => (props.$active ? '#000' : '#fff')};
  font-weight: ${(props) => (props.$active || props.$unread ? 600 : 400)};
  text-decoration: ${(props) => (props.$unread ? 'underline' : 'none')};
`;
const TabClose = styled.button`
  color: ${(props) => (props.$active ? '#6b3c10' : '#e4e4e4')};
`;
const NewTab = styled(IconButton)`
  width: 33px;
  height: 31px;
  padding-bottom: 2px;
  border: solid #333;
  border-width: 0 1px;
`;

const BookmarkRow = styled.div`
  display: flex;
  align-items: center;
  gap: 21px;
  height: 30px;
  padding-left: 32px;
`;
const FolderList = styled.div`
  display: flex;
  justify-content: space-between;
  width: 171px;
  margin-left: 15px;
`;
const BookmarkList = styled.div`
  display: flex;
  justify-content: space-between;
  width: ${(props) => props.$width}px;
`;
const Bookmark = styled.a`
  display: block;
`;

const Page = styled.main`
  flex: 1;
  padding-top: 166px;
  color: #333;
  font-family: 'Liberation Sans', sans-serif;
  font-size: 38px;
  text-align: center;
`;
const Line = styled.p`
  margin: 0;
  line-height: 98px;
`;
const CheckForm = styled.form`
  display: flex;
  align-items: baseline;
  justify-content: center;
  gap: 11px;
  line-height: 98px;
`;
const DomainInput = styled.input`
  width: 330px;
  height: 58px;
  padding: 0 8px;
  border: 1px solid #ccc;
  font-family: ${uiFont};
  font-size: 37px;
  &::placeholder {
    color: #ccc;
  }
`;
const TestButton = styled.button`
  padding: 0 11px;
  background: #efefef;
  color: #000;
  font-family: ${uiFont};
  font-size: 16px;
  line-height: 23px;
`;
const Down = styled.b`
  color: #f00;
`;

const StatusBar = styled.footer`
  position: relative;
  display: flex;
  align-items: center;
  justify-content: flex-end;
  height: 22px;
  overflow: hidden;
  color: #000;
  font-size: 18px;
  line-height: 22px;
`;
const PersonaArt = styled.svg`
  position: absolute;
  inset: 0;
  width: 100%;
  height: 100%;
`;
const StatusItem = styled.span`
  position: relative;
  margin-right: ${(props) => props.$space}px;
`;

const Taskbar = styled.div`
  display: flex;
  align-items: stretch;
  height: 38px;
  background: #2c3135;
  color: #fff;
  font-size: 14px;
`;
const Launchers = styled.div`
  display: flex;
  justify-content: space-between;
  width: 509px;
  padding: 0 14px 0 12px;
`;
const Task = styled.button`
  display: flex;
  align-items: center;
  gap: 4px;
  width: ${(props) => props.$width}px;
  margin-right: 6px;
  padding: 3px 0 0 ${(props) => (props.$active ? 10 : 5)}px;
  border-bottom: 3px solid #93a1b0;
  background: ${(props) => (props.$active ? '#394245' : 'none')};
  white-space: nowrap;
`;
const Tray = styled.div`
  display: flex;
  align-items: center;
  gap: 10px;
  margin: 0 5px 0 auto;
  padding-right: 25px;
  border-right: 1px solid #777;
`;
const Clock = styled.span`
  width: 51px;
  padding-left: 3px;
`;
